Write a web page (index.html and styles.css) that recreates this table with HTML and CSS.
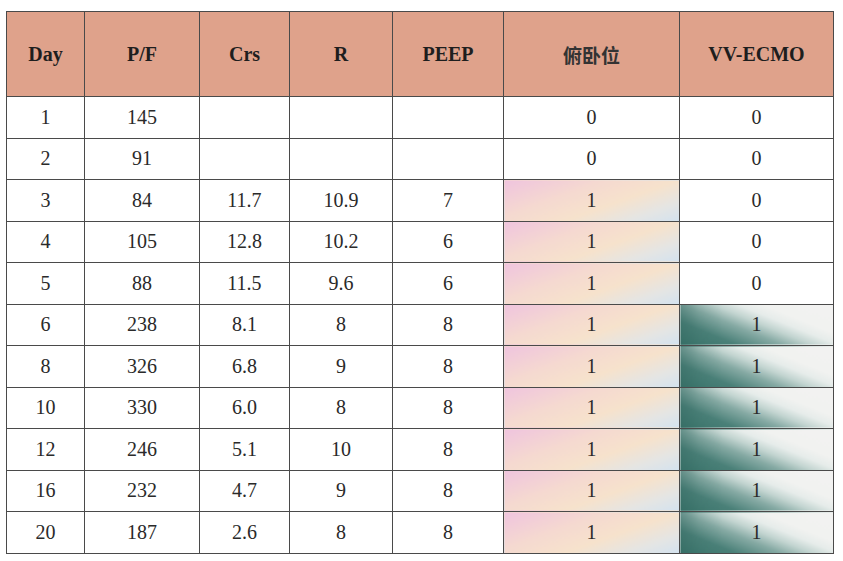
FILE: index.html
```html
<!DOCTYPE html>
<html lang="zh">
<head>
<meta charset="utf-8">
<title>Table</title>
<link rel="stylesheet" href="styles.css">
</head>
<body>
<div class="wrap">
<table class="data">
  <colgroup>
    <col class="c1"><col class="c2"><col class="c3"><col class="c4"><col class="c5"><col class="c6"><col class="c7">
  </colgroup>
  <thead>
    <tr><th>Day</th><th>P/F</th><th>Crs</th><th>R</th><th>PEEP</th><th class="cjk">俯卧位</th><th>VV-ECMO</th></tr>
  </thead>
  <tbody>
    <tr><td>1</td><td>145</td><td></td><td></td><td></td><td>0</td><td>0</td></tr>
    <tr><td>2</td><td>91</td><td></td><td></td><td></td><td>0</td><td>0</td></tr>
    <tr><td>3</td><td>84</td><td>11.7</td><td>10.9</td><td>7</td><td class="prone">1</td><td>0</td></tr>
    <tr><td>4</td><td>105</td><td>12.8</td><td>10.2</td><td>6</td><td class="prone">1</td><td>0</td></tr>
    <tr><td>5</td><td>88</td><td>11.5</td><td>9.6</td><td>6</td><td class="prone">1</td><td>0</td></tr>
    <tr><td>6</td><td>238</td><td>8.1</td><td>8</td><td>8</td><td class="prone">1</td><td class="ecmo">1</td></tr>
    <tr><td>8</td><td>326</td><td>6.8</td><td>9</td><td>8</td><td class="prone">1</td><td class="ecmo">1</td></tr>
    <tr><td>10</td><td>330</td><td>6.0</td><td>8</td><td>8</td><td class="prone">1</td><td class="ecmo">1</td></tr>
    <tr><td>12</td><td>246</td><td>5.1</td><td>10</td><td>8</td><td class="prone">1</td><td class="ecmo">1</td></tr>
    <tr><td>16</td><td>232</td><td>4.7</td><td>9</td><td>8</td><td class="prone">1</td><td class="ecmo">1</td></tr>
    <tr><td>20</td><td>187</td><td>2.6</td><td>8</td><td>8</td><td class="prone">1</td><td class="ecmo">1</td></tr>
  </tbody>
</table>
</div>
</body>
</html>
```

FILE: styles.css
```css
html, body {
  margin: 0;
  padding: 0;
  background: #ffffff;
}
.wrap {
  padding: 11px 0 0 6px;
}
.data {
  border-collapse: collapse;
  table-layout: fixed;
  width: 827px;
  font-family: "Liberation Serif", "Times New Roman", serif;
  font-size: 20px;
  color: #2a2a2a;
}
.c1 { width: 78px; }
.c2 { width: 115px; }
.c3 { width: 90px; }
.c4 { width: 103px; }
.c5 { width: 111px; }
.c6 { width: 176px; }
.c7 { width: 154px; }
.data th, .data td {
  border: 1px solid #4a4a4a;
  text-align: center;
  vertical-align: middle;
  padding: 0;
}
.data th {
  background: #dfa28b;
  height: 84px;
  font-weight: bold;
  color: #1e1e1e;
}
.data th.cjk {
  font-family: "Noto Sans CJK SC", sans-serif;
  font-weight: 700;
  font-size: 19px;
  color: #333;
}
.data td {
  height: 40.5px;
}
.prone {
  background: linear-gradient(160deg, #efc4de 0%, #f5d9d0 35%, #f6e2cc 60%, #e4e5e4 82%, #d3e2ef 100%);
}
.ecmo {
  background:
    linear-gradient(to right, rgba(47,100,92,0.35) 0%, rgba(47,100,92,0.1) 12%, rgba(47,100,92,0) 28%),
    linear-gradient(22deg, #3a746b 0%, #4a8078 22%, #86aaa4 40%, #c2d4d0 52%, #e6ecea 62%, #f1f2f0 72%, #f2f2f1 100%);
}
```
